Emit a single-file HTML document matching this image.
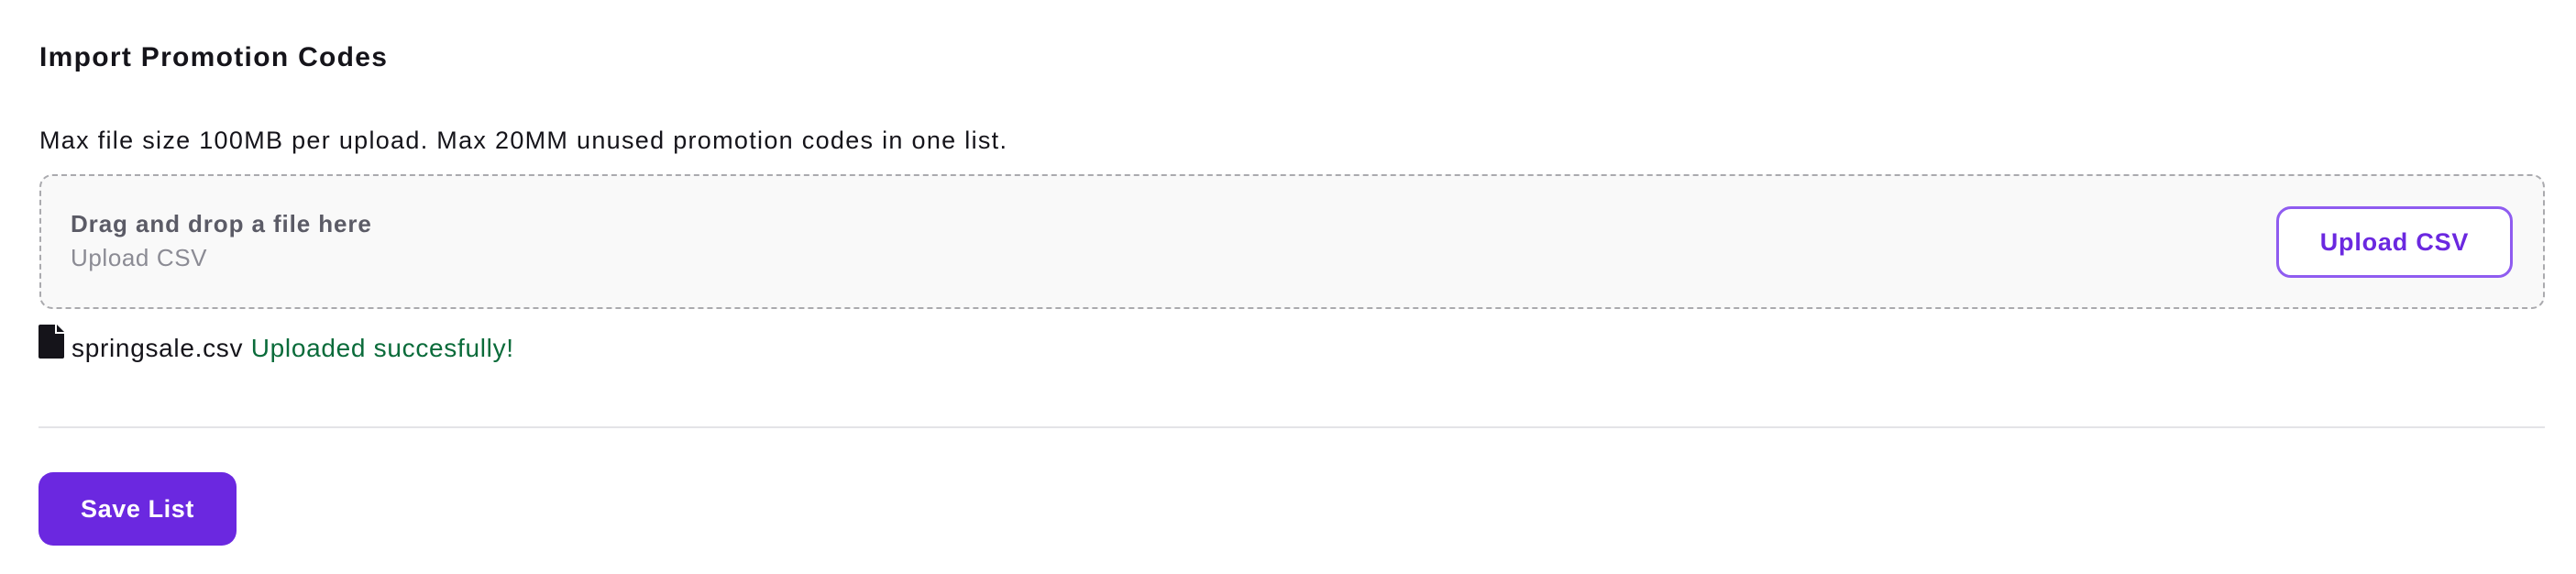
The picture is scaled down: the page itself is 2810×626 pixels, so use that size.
<!DOCTYPE html>
<html><head><meta charset="utf-8"><style>
*{margin:0;padding:0;box-sizing:border-box}
body{width:2810px;height:626px;background:#fff;font-family:"Liberation Sans",sans-serif;color:#15141a;position:relative;overflow:hidden}
.a{position:absolute;white-space:nowrap}
</style></head><body>
<div class="a" style="left:43px;top:46px;font-size:30px;font-weight:bold;letter-spacing:1.3px">Import Promotion Codes</div>
<div class="a" style="left:43px;top:138px;font-size:27px;letter-spacing:1.3px">Max file size 100MB per upload. Max 20MM unused promotion codes in one list.</div>
<div class="a" style="left:43px;top:190px;width:2733px;height:147px;background:#f9f9f9;border:2.5px dashed #aaaaae;border-radius:14px"></div>
<div class="a" style="left:77px;top:229px;font-size:26px;font-weight:bold;color:#5b5b66;letter-spacing:0.9px">Drag and drop a file here</div>
<div class="a" style="left:77px;top:266px;font-size:26px;color:#8b8b94;letter-spacing:0.6px">Upload CSV</div>
<div class="a" style="left:2483px;top:225px;width:258px;height:78px;border:3px solid #8f5cf0;border-radius:16px;background:#fff;color:#6b28e0;font-size:27px;font-weight:bold;display:flex;align-items:center;justify-content:center;letter-spacing:0.8px">Upload CSV</div>
<svg class="a" style="left:42px;top:354px" width="28" height="37" viewBox="0 0 28 37"><path d="M2 0H18V10H28V35A2 2 0 0 1 26 37H2A2 2 0 0 1 0 35V2A2 2 0 0 1 2 0Z" fill="#15141a"/><path d="M20 0L28 8H20Z" fill="#15141a"/></svg>
<div class="a" style="left:78px;top:364px;font-size:28px;letter-spacing:0.7px"><span>springsale.csv</span> <span style="color:#0a6b3a">Uploaded succesfully!</span></div>
<div class="a" style="left:42px;top:465px;width:2734px;height:2px;background:#e4e4e7"></div>
<div class="a" style="left:42px;top:515px;width:216px;height:80px;background:#6b28e0;border-radius:16px;color:#fff;font-size:27px;font-weight:bold;display:flex;align-items:center;justify-content:center;letter-spacing:0.6px">Save List</div>
</body></html>
